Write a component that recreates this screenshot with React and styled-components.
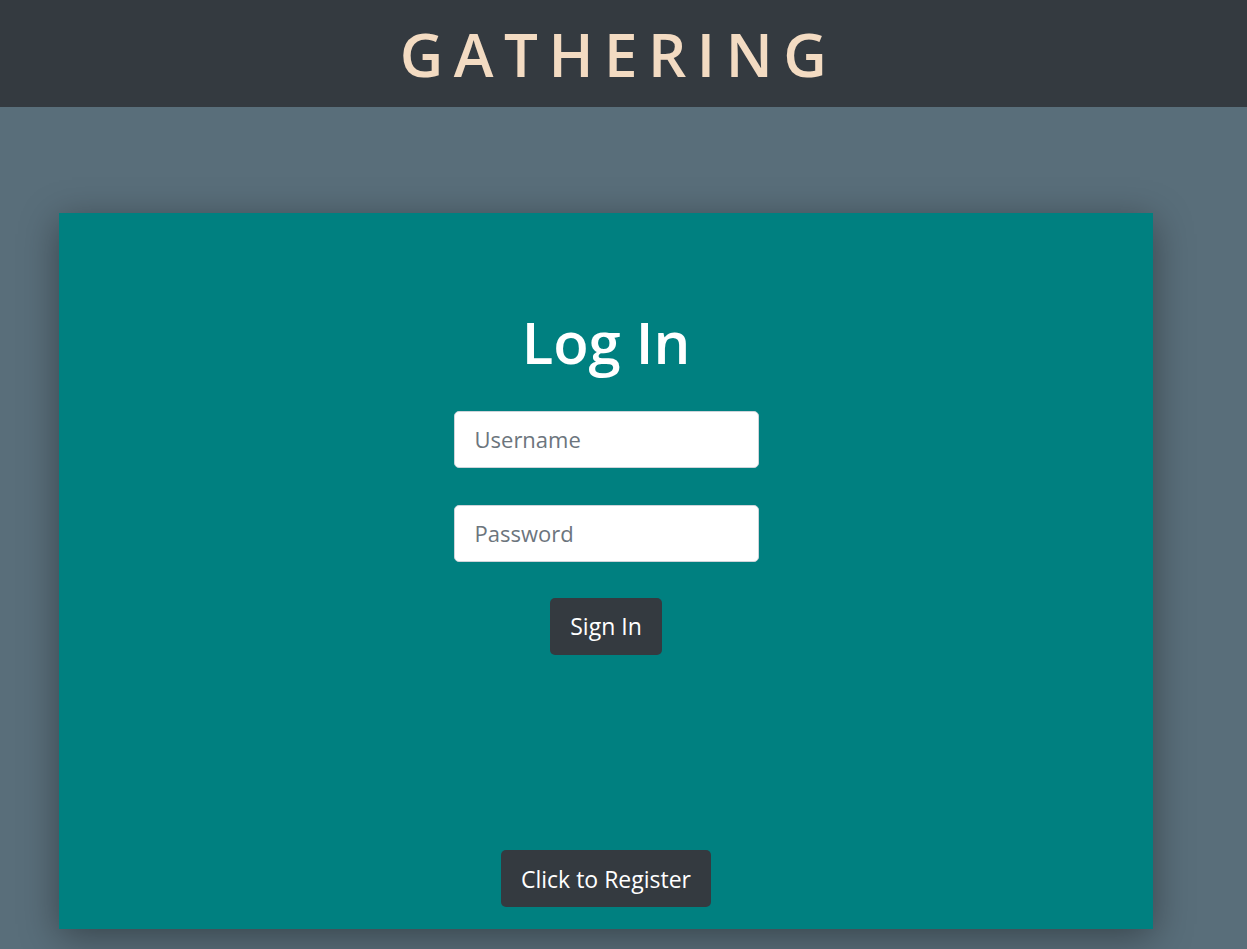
import styled, { createGlobalStyle } from 'styled-components';

const GlobalStyle = createGlobalStyle`
  html, body {
    margin: 0;
    padding: 0;
    background-color: #596e7a;
    font-family: "Open Sans", "Noto Sans", sans-serif;
  }

  * {
    box-sizing: border-box;
  }
`;

const Page = styled.div`
  min-height: 949px;
  display: flex;
  flex-direction: column;
`;

const Header = styled.header`
  height: 107px;
  background-color: #343a40;
  display: flex;
  justify-content: center;
  align-items: center;

  h1 {
    margin: 0 10px 0 0;
    color: #f3dbc2;
    font-size: 60px;
    font-weight: 600;
    letter-spacing: 10.5px;
    line-height: 1;
  }
`;

const Main = styled.main`
  padding: 106px 94px 20px 59px;
`;

const Card = styled.section`
  height: 716px;
  background-color: #008080;
  box-shadow: 0 8px 36px rgba(0, 0, 0, 0.38);
  display: flex;
  flex-direction: column;
  align-items: center;
  padding: 94px 0 22px;
`;

const Title = styled.h2`
  margin: 0 0 34px;
  color: #fff;
  font-size: 58px;
  font-weight: 600;
  line-height: 1.2;
`;

const Form = styled.form`
  display: flex;
  flex-direction: column;
  align-items: center;
  gap: 37px;

  button {
    margin-top: -1px;
  }
`;

const Input = styled.input`
  width: 305px;
  height: 57px;
  padding: 0 20px;
  border: 1px solid #ced4da;
  border-radius: 5px;
  background: #fff;
  font-family: inherit;
  font-size: 22px;
  color: #495057;
  outline: none;

  &::placeholder {
    color: #6c757d;
  }
`;

const Button = styled.button`
  height: 57px;
  padding: 0 20px;
  border: none;
  border-radius: 5px;
  background-color: #343a40;
  color: #fff;
  font-family: inherit;
  font-size: 23px;
  cursor: pointer;
`;

const Bottom = styled.div`
  margin-top: auto;
`;

const App = () => {
  return (
    <>
      <GlobalStyle />
      <Page>
        <Header>
          <h1>GATHERING</h1>
        </Header>
        <Main>
          <Card>
            <Title>Log In</Title>
            <Form onSubmit={(e) => e.preventDefault()}>
              <Input type="text" placeholder="Username" />
              <Input type="password" placeholder="Password" />
              <Button type="submit">Sign In</Button>
            </Form>
            <Bottom>
              <Button type="button">Click to Register</Button>
            </Bottom>
          </Card>
        </Main>
      </Page>
    </>
  );
};

export default App;
